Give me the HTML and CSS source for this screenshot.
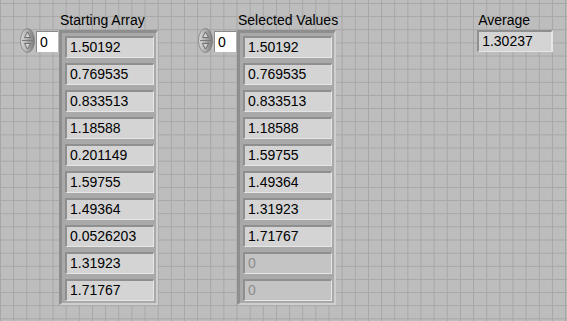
FILE: index.html
```html
<!DOCTYPE html>
<html lang="en">
<head>
    <meta charset="UTF-8">
    <title>Array Average</title>
    <link rel="stylesheet" href="styles.css">
</head>
<body>

    <!-- Front panel -->
    <div class="panel">

        <!-- Starting array with index -->
        <div class="group">
            <div class="index">
                <svg class="spinner" width="15" height="25" viewBox="0 0 15 25">
                    <defs>
                        <linearGradient id="sp1" x1="0" y1="0" x2="1" y2="0">
                            <stop offset="0" stop-color="#dcdcdc"/>
                            <stop offset="0.5" stop-color="#aaaaaa"/>
                            <stop offset="1" stop-color="#7c7c7c"/>
                        </linearGradient>
                    </defs>
                    <ellipse cx="7.5" cy="12.5" rx="7" ry="12" fill="url(#sp1)" stroke="#7e7e7e" stroke-width="0.8"/>
                    <line x1="2" y1="12.5" x2="13" y2="12.5" stroke="#7a7a7a" stroke-width="1"/>
                    <path d="M7.5 4 L10.5 9.5 L4.5 9.5 Z" fill="#d2d2d2" stroke="#5e5e5e" stroke-width="0.8"/>
                    <path d="M7.5 21 L10.5 15.5 L4.5 15.5 Z" fill="#d2d2d2" stroke="#5e5e5e" stroke-width="0.8"/>
                </svg>
                <div class="index-box">0</div>
            </div>
            <div class="array">
                <div class="label">Starting Array</div>
                <div class="frame">
                    <div class="cell">1.50192</div>
                    <div class="cell">0.769535</div>
                    <div class="cell">0.833513</div>
                    <div class="cell">1.18588</div>
                    <div class="cell">0.201149</div>
                    <div class="cell">1.59755</div>
                    <div class="cell">1.49364</div>
                    <div class="cell">0.0526203</div>
                    <div class="cell">1.31923</div>
                    <div class="cell">1.71767</div>
                </div>
            </div>
        </div>

        <!-- Selected values with index -->
        <div class="group">
            <div class="index">
                <svg class="spinner" width="15" height="25" viewBox="0 0 15 25">
                    <defs>
                        <linearGradient id="sp2" x1="0" y1="0" x2="1" y2="0">
                            <stop offset="0" stop-color="#dcdcdc"/>
                            <stop offset="0.5" stop-color="#aaaaaa"/>
                            <stop offset="1" stop-color="#7c7c7c"/>
                        </linearGradient>
                    </defs>
                    <ellipse cx="7.5" cy="12.5" rx="7" ry="12" fill="url(#sp2)" stroke="#7e7e7e" stroke-width="0.8"/>
                    <line x1="2" y1="12.5" x2="13" y2="12.5" stroke="#7a7a7a" stroke-width="1"/>
                    <path d="M7.5 4 L10.5 9.5 L4.5 9.5 Z" fill="#d2d2d2" stroke="#5e5e5e" stroke-width="0.8"/>
                    <path d="M7.5 21 L10.5 15.5 L4.5 15.5 Z" fill="#d2d2d2" stroke="#5e5e5e" stroke-width="0.8"/>
                </svg>
                <div class="index-box">0</div>
            </div>
            <div class="array">
                <div class="label">Selected Values</div>
                <div class="frame">
                    <div class="cell">1.50192</div>
                    <div class="cell">0.769535</div>
                    <div class="cell">0.833513</div>
                    <div class="cell">1.18588</div>
                    <div class="cell">1.59755</div>
                    <div class="cell">1.49364</div>
                    <div class="cell">1.31923</div>
                    <div class="cell">1.71767</div>
                    <div class="cell empty">0</div>
                    <div class="cell empty">0</div>
                </div>
            </div>
        </div>

        <!-- Average indicator -->
        <div class="average">
            <div class="label">Average</div>
            <div class="indicator">1.30237</div>
        </div>

    </div>

</body>
</html>
```

FILE: styles.css
```css
/* Base */
body, html {
    margin: 0;
    padding: 0;
    height: 100%;
    overflow: hidden;
    font-family: 'Liberation Sans', Arial, sans-serif;
    font-size: 14px;
    color: #000;
}

/* Front panel with grid */
.panel {
    height: 100%;
    box-sizing: border-box;
    display: flex;
    align-items: flex-start;
    padding: 12px 0 0 20px;
    background-color: #bdbdbd;
    background-image:
        linear-gradient(to right, #a6a6a6 1px, transparent 1px),
        linear-gradient(to bottom, #a6a6a6 1px, transparent 1px);
    background-size: 13.15px 13.15px;
    background-position: 0px 3px;
}

.group {
    display: flex;
    align-items: flex-start;
    margin-right: 40px;
}

/* Index control */
.index {
    display: flex;
    align-items: flex-start;
    margin-top: 16px;
    margin-right: 1px;
}

.spinner {
    display: block;
}

.index-box {
    width: 22px;
    height: 21px;
    box-sizing: border-box;
    margin-top: 3px;
    margin-left: 1px;
    padding: 2px 0 0 3px;
    background: #fff;
    border-top: 1px solid #8a8a8a;
    border-left: 1px solid #8a8a8a;
    line-height: 17px;
}

/* Array */
.label {
    height: 18px;
    line-height: 17px;
    padding-left: 1px;
    white-space: nowrap;
}

.frame {
    width: 99px;
    box-sizing: border-box;
    padding: 3px 2px 2px 3px;
    background: #a9a9a9;
    border-top: 3px solid #8e8e8e;
    border-left: 3px solid #8e8e8e;
    border-right: 2px solid #cfcfcf;
    border-bottom: 2px solid #cfcfcf;
}

.cell {
    height: 22px;
    box-sizing: border-box;
    margin-bottom: 5px;
    padding-left: 3px;
    line-height: 19px;
    background: #d4d4d4;
    border-top: 2px solid #8f8f8f;
    border-left: 2px solid #8f8f8f;
    border-right: 1px solid #e6e6e6;
    border-bottom: 1px solid #e6e6e6;
}

.cell:last-child {
    margin-bottom: 0;
}

.cell.empty {
    color: #8c8c8c;
    background: #c4c4c4;
}

/* Average indicator */
.average {
    margin-left: 99px;
}

.indicator {
    width: 76px;
    height: 22px;
    box-sizing: border-box;
    padding-left: 3px;
    line-height: 19px;
    background: #d4d4d4;
    border-top: 2px solid #8f8f8f;
    border-left: 2px solid #8f8f8f;
    border-right: 2px solid #e6e6e6;
    border-bottom: 1px solid #e6e6e6;
}
```
